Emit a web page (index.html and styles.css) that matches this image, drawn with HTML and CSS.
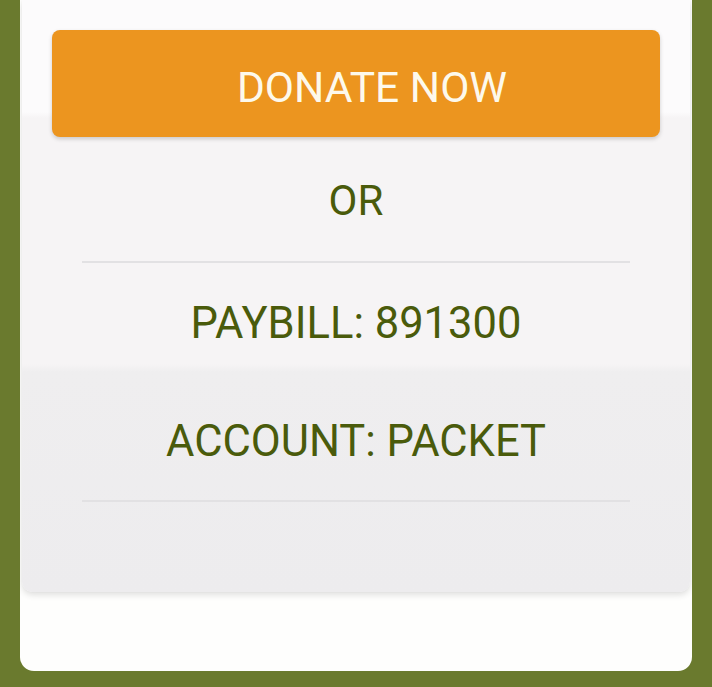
FILE: index.html
```html
<!DOCTYPE html>
<html>
<head>
<meta charset="utf-8">
<link rel="stylesheet" href="styles.css">
</head>
<body>
<div class="card">
  <div class="panel">
    <div class="btn">DONATE NOW</div>
    <div class="or">OR</div>
    <div class="rule"></div>
    <div class="info paybill">PAYBILL: 891300</div>
    <div class="info account">ACCOUNT: PACKET</div>
    <div class="rule"></div>
  </div>
</div>
</body>
</html>
```
FILE: styles.css
```css
html, body {
  margin: 0;
  padding: 0;
  background: #6a7a2e;
  height: 687px;
  overflow: hidden;
}
.card {
  margin: 0 20px;
  height: 671px;
  background: #fefefd;
  border-radius: 0 0 14px 14px;
  padding: 0 2px;
  box-sizing: border-box;
  overflow: hidden;
}
.panel {
  height: 592px;
  background: linear-gradient(#fcfbfc 0, #fcfbfc 112px, #f6f4f5 118px, #f6f4f5 364px, #efeeef 372px, #edecee 592px);
  border-radius: 0 0 10px 10px;
  box-shadow: 0 3px 6px rgba(0,0,0,0.12), 0 0 1px rgba(0,0,0,0.08);
  padding-top: 30px;
  box-sizing: border-box;
  display: flex;
  flex-direction: column;
  align-items: stretch;
  font-family: Roboto, "Liberation Sans", sans-serif;
}
.btn {
  margin: 0 30px;
  height: 107px;
  background: #ec951f;
  border-radius: 8px;
  box-shadow: 0 2px 4px rgba(0,0,0,0.18);
  color: #fdf9ec;
  font-size: 42.5px;
  display: flex;
  align-items: center;
  justify-content: center;
  padding: 8px 0 0 32px;
  box-sizing: border-box;
}
.or {
  height: 124px;
  display: flex;
  align-items: center;
  justify-content: center;
  color: #4a5b0b;
  font-size: 42px;
  padding-top: 3px;
  box-sizing: border-box;
}
.rule {
  margin: 0 60px;
  height: 2px;
  background: #e2e1e3;
  flex: none;
}
.info {
  display: flex;
  align-items: center;
  justify-content: center;
  color: #4a5b0b;
  font-size: 43.5px;
}
.paybill {
  height: 119px;
  padding-top: 2px;
  box-sizing: border-box;
}
.account {
  height: 118px;
}
```
